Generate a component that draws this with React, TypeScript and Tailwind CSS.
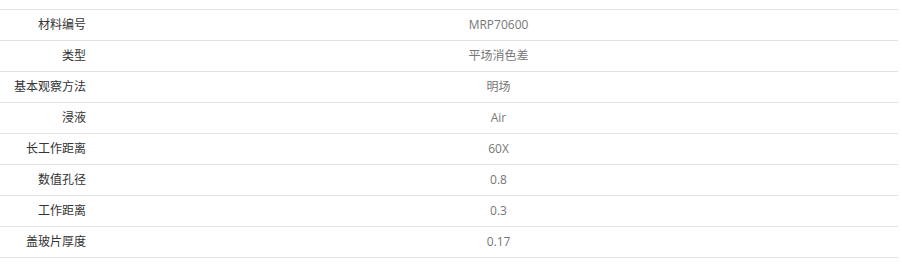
import React from "react";

const rows: [string, string][] = [
  ["材料编号", "MRP70600"],
  ["类型", "平场消色差"],
  ["基本观察方法", "明场"],
  ["浸液", "Air"],
  ["长工作距离", "60X"],
  ["数值孔径", "0.8"],
  ["工作距离", "0.3"],
  ["盖玻片厚度", "0.17"],
];

export default function App() {
  return (
    <div className="w-[902px] h-[278px] bg-white pt-[9px]" style={{ fontFamily: '"Open Sans", "Noto Sans CJK SC", sans-serif' }}>
      <div className="w-[898px] border-t border-[#e3e3e3]">
        {rows.map(([k, v]) => (
          <div key={k} className="flex h-[31px] items-center border-b border-[#e3e3e3] text-[12px]">
            <div className="w-[99px] shrink-0 pr-[13px] text-right text-[#333333]">{k}</div>
            <div className="flex-1 text-center text-[#777777]">{v}</div>
          </div>
        ))}
      </div>
    </div>
  );
}
